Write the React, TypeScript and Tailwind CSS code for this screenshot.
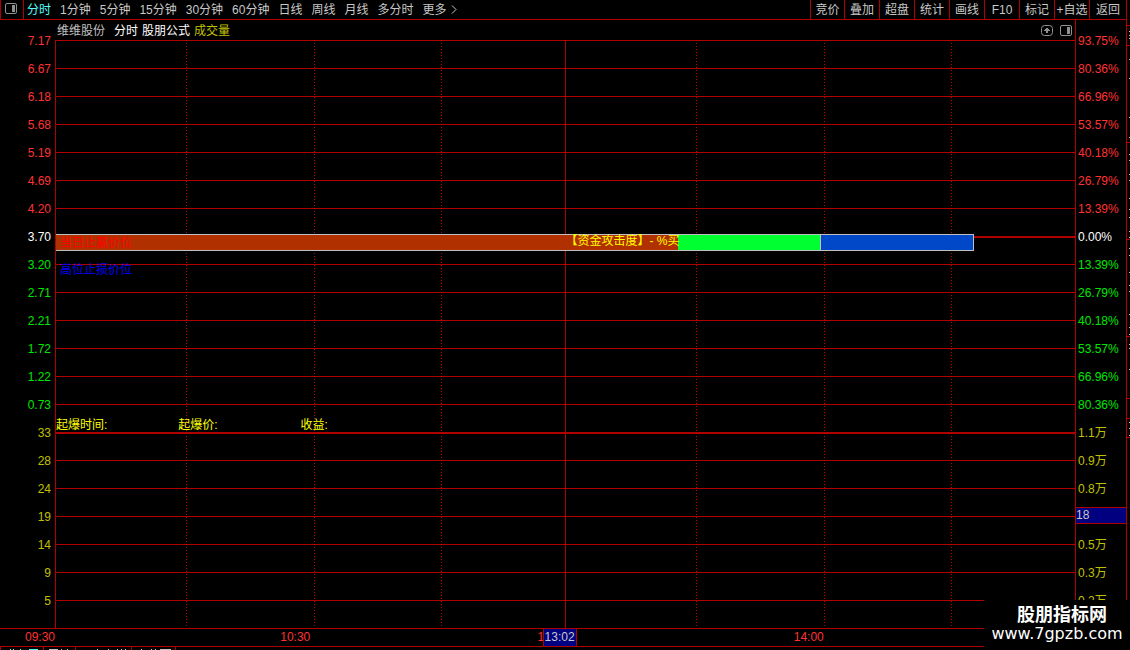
import React from 'react';

const periods = ['分时', '1分钟', '5分钟', '15分钟', '30分钟', '60分钟', '日线', '周线', '月线', '多分时'];
const tools = ['竞价', '叠加', '超盘', '统计', '画线', 'F10', '标记', '+自选', '返回'];

const rows = [
  { left: '7.17', right: '93.75%', color: 'text-[#ff3232]' },
  { left: '6.67', right: '80.36%', color: 'text-[#ff3232]' },
  { left: '6.18', right: '66.96%', color: 'text-[#ff3232]' },
  { left: '5.68', right: '53.57%', color: 'text-[#ff3232]' },
  { left: '5.19', right: '40.18%', color: 'text-[#ff3232]' },
  { left: '4.69', right: '26.79%', color: 'text-[#ff3232]' },
  { left: '4.20', right: '13.39%', color: 'text-[#ff3232]' },
  { left: '3.70', right: '0.00%', color: 'text-white', thick: true },
  { left: '3.20', right: '13.39%', color: 'text-[#00e600]' },
  { left: '2.71', right: '26.79%', color: 'text-[#00e600]' },
  { left: '2.21', right: '40.18%', color: 'text-[#00e600]' },
  { left: '1.72', right: '53.57%', color: 'text-[#00e600]' },
  { left: '1.22', right: '66.96%', color: 'text-[#00e600]' },
  { left: '0.73', right: '80.36%', color: 'text-[#00e600]' },
  { left: '33', right: '1.1万', color: 'text-[#c0c000]', thick: true },
  { left: '28', right: '0.9万', color: 'text-[#c0c000]' },
  { left: '24', right: '0.8万', color: 'text-[#c0c000]' },
  { left: '19', right: '18', color: 'text-[#c0c000]', cursor: true },
  { left: '14', right: '0.5万', color: 'text-[#c0c000]' },
  { left: '9', right: '0.3万', color: 'text-[#c0c000]' },
  { left: '5', right: '0.2万', color: 'text-[#c0c000]' },
];

// the plot is split by the half-hour marks
const columns = 'grid grid-cols-[131fr_128fr_127fr_124fr_131fr_128fr_127fr_123fr]';
const verticals = ['dotted', 'dotted', 'dotted', 'solid', 'dotted', 'dotted', 'dotted'];

const quoteLines = [25, 45, 142, 239, 336, 398, 418, 437];
const quoteMarks = [
  31, 35, 38, 59, 78, 117, 137, 154, 160, 174, 180, 198, 209, 217, 231, 237, 248, 255, 272, 285, 291, 314, 327, 334,
  344, 348, 369, 422, 428, 435,
];

// [x, width] of the visible tops in each tab
const tabs = [
  { width: 'w-[43px]', color: 'fill-[#54fcfc]', marks: [[9, 1], [12, 1], [19, 1], [28, 9]] },
  { width: 'w-8', color: 'fill-[#c0c0c0]', marks: [[5, 9], [17, 1], [23, 1]] },
  { width: 'w-14', color: 'fill-[#c0c0c0]', marks: [[21, 1], [32, 1], [41, 1], [45, 1], [49, 1]] },
  { width: 'w-11', color: 'fill-[#c0c0c0]', marks: [[9, 1], [19, 1], [23, 1], [28, 11]] },
];

const PanelIcon = () => (
  <svg width="12" height="11" viewBox="0 0 12 11" fill="none" aria-hidden="true">
    <rect x="0.5" y="0.5" width="11" height="10" rx="1.5" stroke="#909090" />
    <rect x="7" y="2" width="3" height="7" fill="#909090" />
  </svg>
);

const UpIcon = () => (
  <svg width="12" height="11" viewBox="0 0 12 11" fill="none" aria-hidden="true">
    <rect x="0.5" y="0.5" width="11" height="10" rx="3" stroke="#909090" />
    <path d="M5 3h2v1h1v1h1v1H7v2H5V6H3V5h1V4h1z" fill="#909090" />
  </svg>
);

const Toolbar = () => (
  <header className="flex h-5 border-x border-b border-[#b00000] text-[#c8c8c8]">
    <button className="flex w-[23px] items-center border-r border-[#b00000] pb-0.5 pl-1" aria-label="面板">
      <PanelIcon />
    </button>
    <nav className="flex items-center gap-[9px] pl-[3px]">
      {periods.map((period, i) => (
        <button key={period} className={i === 0 ? 'text-[#54fcfc]' : ''}>
          {period}
        </button>
      ))}
      <button className="flex items-center gap-1">
        更多
        <svg width="6" height="9" viewBox="0 0 6 9" fill="none" aria-hidden="true">
          <path d="M1 0.5L5 4.5L1 8.5" stroke="#c8c8c8" />
        </svg>
      </button>
    </nav>
    <div className="ml-auto flex">
      {tools.map((tool) => (
        <button key={tool} className="w-[35px] border-l border-[#b00000] first:w-[34px] last:w-[37px]">
          {tool}
        </button>
      ))}
    </div>
  </header>
);

const TitleRow = () => (
  <div className="flex h-5 items-center pt-0.5 pl-0.5">
    <span className="mr-[9px] text-[#c0c0c0]">维维股份</span>
    <div className="flex gap-1 text-white">
      <span>分时</span>
      <span>股朋公式</span>
      <span className="text-[#c0c000]">成交量</span>
    </div>
    <div className="ml-auto flex gap-[7px] pr-[3px] pb-0.5">
      <button aria-label="上移">
        <UpIcon />
      </button>
      <button aria-label="侧栏">
        <PanelIcon />
      </button>
    </div>
  </div>
);

const Plot = () => (
  <div className="relative border-l border-[#b00000]">
    {rows.map((row) => (
      <div key={row.left} className={`h-7 border-[#b00000] ${row.thick ? 'border-t-2' : 'border-t'}`} />
    ))}

    <div className={`absolute inset-0 ${columns}`}>
      {verticals.map((kind, i) => (
        <div key={i} className="flex justify-end">
          <div
            className={
              kind === 'solid'
                ? 'w-px bg-[#b00000]'
                : 'mt-[3px] w-px bg-[linear-gradient(#c80000_1px,transparent_1px)] bg-[length:1px_3px]'
            }
          />
        </div>
      ))}
    </div>

    {/* capital strength bar */}
    <div className="absolute top-[194px] left-0 flex h-[17px] w-[90.1%] border-y border-r border-[#c0c0c0]">
      <div className="w-[67.8%] bg-[#b03000]" />
      <div className="w-[15.5%] bg-[#00ff30]" />
      <div className="flex-1 border-l border-[#c0c0c0] bg-[#0048c8]" />
    </div>
    <span className="absolute top-[193px] left-1/2 text-[#ffff00]">【资金攻击度】- %买</span>
    <span className="absolute top-[195px] left-1 text-[#ff0000]">当日止赢价位</span>
    <span className="absolute top-[222px] left-1 text-[#0000ff]">高位止损价位</span>

    <div className="absolute top-[377px] left-0 flex w-full text-[#ffff00]">
      <span className="w-[12%]">起爆时间:</span>
      <span className="w-[12%]">起爆价:</span>
      <span>收益:</span>
    </div>
  </div>
);

const TimeAxis = () => (
  <div className="flex h-[18px] border-t border-[#b00000] text-[#ff3232]">
    <time className="w-[55px] text-right">09:30</time>
    <div className={`relative mr-[51px] flex-1 ${columns}`}>
      <time className="col-span-2 pr-1 text-right">10:30</time>
      <time className="col-span-2 -mr-0.5 text-right">13:00</time>
      <time className="col-span-2 pr-px text-right">14:00</time>
      <time className="absolute top-0 left-[47.8%] h-full border-x border-[#b00000] bg-[#000080] px-px text-[#c8c8c8]">
        13:02
      </time>
    </div>
  </div>
);

const Tabs = () => (
  <div className="flex h-1 overflow-hidden border-t border-l border-[#b00000]">
    {tabs.map((tab) => (
      <div key={tab.width} className={`border-r border-[#b00000] ${tab.width}`}>
        <svg width="100%" height="3" className={tab.color} aria-hidden="true">
          {tab.marks.map(([x, width]) => (
            <rect key={x} x={x} y="2" width={width} height="1" />
          ))}
        </svg>
      </div>
    ))}
  </div>
);

const QuoteStrip = () => (
  <aside className="w-[3px] overflow-hidden">
    <svg width="3" height="600" aria-hidden="true">
      {quoteLines.map((y) => (
        <rect key={y} x="0" y={y} width="3" height="1" fill="#b00000" />
      ))}
      {quoteMarks.map((y) => (
        <rect key={y} x="2" y={y} width="1" height="1" fill="#c0c0c0" />
      ))}
    </svg>
  </aside>
);

const Watermark = () => (
  <div className="absolute right-0 bottom-0 h-[50px] w-[146px] bg-black text-center text-white">
    <div className="pt-[5px] pl-2.5 text-[18px] leading-5 font-bold">股朋指标网</div>
    <div className="font-['DejaVu_Sans',sans-serif] text-[16px] leading-[18px]">www.7gpzb.com</div>
  </div>
);

const App = () => {
  return (
    <div className="relative flex min-h-screen overflow-hidden bg-black font-['Liberation_Sans','Noto_Sans_CJK_SC',sans-serif] text-[12px] leading-4 whitespace-nowrap">
      <main className="min-w-0 flex-1">
        <Toolbar />
        <div className="flex border-r border-[#b00000]">
          <div className="w-[55px] pt-[7px] pr-1">
            {rows.map((row) => (
              <div key={row.left} className={`flex h-7 items-center justify-end ${row.color}`}>
                {row.left}
              </div>
            ))}
          </div>
          <section className="min-w-0 flex-1">
            <TitleRow />
            <Plot />
          </section>
          <div className="w-[51px] border-l border-[#b00000] pt-[7px]">
            {rows.map((row) => (
              <div key={row.left} className={`flex h-7 items-center ${row.color}`}>
                {row.cursor ? (
                  <span className="mb-[3px] w-full border-y border-[#b00000] bg-[#000080] leading-[15px] text-[#c8c8c8]">
                    {row.right}
                  </span>
                ) : (
                  <span className="pl-0.5">{row.right}</span>
                )}
              </div>
            ))}
          </div>
        </div>
        <div className="border-r border-[#b00000]">
          <TimeAxis />
          <Tabs />
        </div>
      </main>
      <QuoteStrip />
      <Watermark />
    </div>
  );
};

export default App;
